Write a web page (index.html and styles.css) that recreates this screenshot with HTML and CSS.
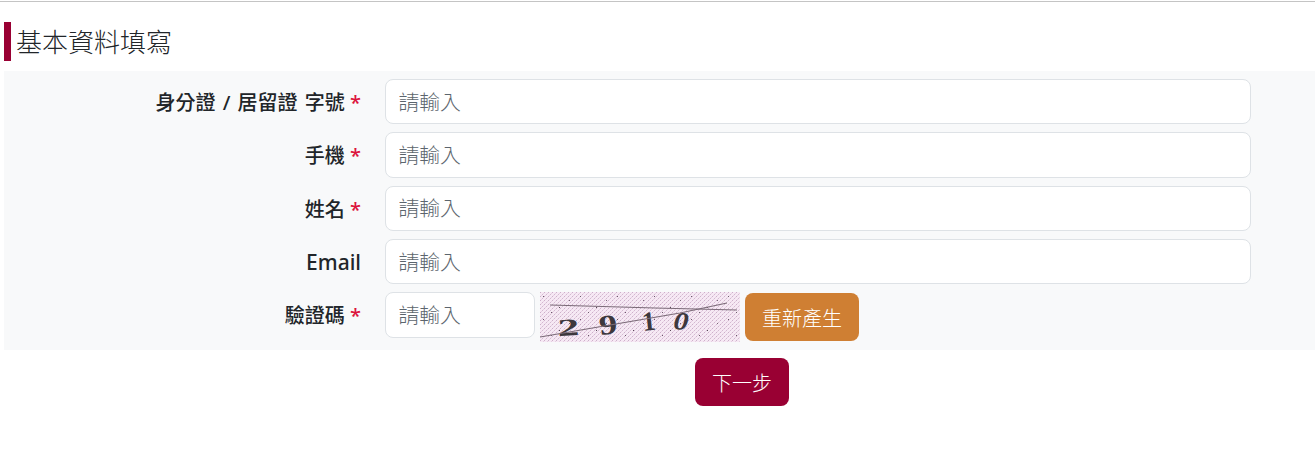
FILE: index.html
```html
<!DOCTYPE html>
<html lang="zh-Hant">
<head>
    <title>基本資料填寫</title>
    <meta charset="UTF-8">
    <link rel="stylesheet" href="styles.css">
</head>
<body>
    <div class="top-line"></div>
    <div class="content">
        <h2 class="section-title">基本資料填寫</h2>
        <div class="form-box">
            <div class="form-row">
                <label class="form-label"><span class="label-text">身分證 / 居留證 字號</span> <span class="req">*</span></label>
                <input class="form-input" type="text" placeholder="請輸入">
            </div>
            <div class="form-row">
                <label class="form-label"><span class="label-text">手機</span> <span class="req">*</span></label>
                <input class="form-input" type="text" placeholder="請輸入">
            </div>
            <div class="form-row">
                <label class="form-label"><span class="label-text">姓名</span> <span class="req">*</span></label>
                <input class="form-input" type="text" placeholder="請輸入">
            </div>
            <div class="form-row">
                <label class="form-label form-label-latin">Email</label>
                <input class="form-input" type="text" placeholder="請輸入">
            </div>
            <div class="form-row">
                <label class="form-label"><span class="label-text">驗證碼</span> <span class="req">*</span></label>
                <div class="captcha-group">
                    <input class="form-input captcha-input" type="text" placeholder="請輸入">
                    <svg class="captcha" width="200" height="50" viewBox="0 0 200 50">
                        <defs>
                            <pattern id="dither" width="4" height="4" patternUnits="userSpaceOnUse">
                                <rect width="4" height="4" fill="#f6e9f4"/>
                                <rect x="0" y="0" width="1" height="1" fill="#cdb0ca"/>
                                <rect x="2" y="2" width="1" height="1" fill="#d4b9d1"/>
                                <rect x="1" y="3" width="1" height="1" fill="#e6d0e3"/>
                                <rect x="3" y="1" width="1" height="1" fill="#e6d0e3"/>
                            </pattern>
                            <pattern id="specks" width="37" height="23" patternUnits="userSpaceOnUse">
                                <rect x="3" y="4" width="1" height="1" fill="#6b5a6a"/>
                                <rect x="19" y="15" width="1" height="1" fill="#574a56"/>
                                <rect x="29" y="8" width="1" height="1" fill="#7a6878"/>
                                <rect x="11" y="20" width="1" height="1" fill="#6b5a6a"/>
                            </pattern>
                        </defs>
                        <rect width="200" height="50" fill="url(#dither)"/>
                        <rect width="200" height="50" fill="url(#specks)"/>
                        <g class="captcha-digits">
                            <text transform="translate(18 44) rotate(-3) scale(1.8 1)">2</text>
                            <text transform="translate(60 43) rotate(-6) scale(1.3 1)" font-size="28">9</text>
                            <text transform="translate(103 39) rotate(-6)" font-size="27">1</text>
                            <text class="captcha-tilted" transform="translate(133 37) rotate(4) scale(1.2 1)" font-size="25">0</text>
                        </g>
                        <path class="captcha-line" d="M10 13 L115 16 L197 18"/>
                        <path class="captcha-line" d="M0 45 L70 33 L140 21 L187 11"/>
                    </svg>
                    <button class="btn btn-orange" type="button">重新產生</button>
                </div>
            </div>
        </div>
        <div class="form-actions">
            <button class="btn btn-primary" type="button">下一步</button>
        </div>
    </div>
</body>
</html>
```

FILE: styles.css
```css
body {
    margin: 0;
    background: #fff;
    font-family: "Noto Sans", "Noto Sans CJK TC", sans-serif;
    color: #212529;
}
.top-line {
    height: 1px;
    margin-top: 1px;
    background: #c4c4c4;
}
.content {
    padding-left: 4px;
}
.section-title {
    margin: 20px 0 10px;
    height: 39px;
    padding-left: 5px;
    border-left: 7px solid #990033;
    font-size: 26px;
    font-weight: 300;
    line-height: 41px;
    color: #212529;
}
.form-box {
    display: flex;
    flex-direction: column;
    gap: 8px;
    padding: 8px 0 13px;
    background: #f8f9fa;
}
.form-row {
    display: flex;
    align-items: center;
    min-height: 45.3px;
}
.form-label {
    flex: none;
    width: 357px;
    text-align: right;
    font-size: 20px;
    font-weight: 500;
}
.label-text {
    word-spacing: 2px;
}
.form-label-latin {
    font-size: 21px;
}
.req {
    color: #dc143c;
}
.form-input {
    box-sizing: border-box;
    width: 866px;
    height: 45.3px;
    margin-left: 24px;
    padding: 6px 12.5px;
    border: 1px solid #dee2e6;
    border-radius: 8px;
    background: #fff;
    font-family: inherit;
    font-size: 20.8px;
    font-weight: 300;
    color: #212529;
}
.form-input::placeholder {
    color: #5c656d;
    opacity: 1;
}
.captcha-group {
    display: flex;
    align-items: center;
    margin-left: 24px;
    gap: 5px;
    height: 50px;
    margin-bottom: -5px;
}
.captcha-input {
    width: 150px;
    margin-left: 0;
    align-self: flex-start;
}
.captcha {
    display: block;
    flex: none;
}
.captcha-digits {
    font-family: "Liberation Serif", serif;
    font-size: 24px;
    font-weight: bold;
    fill: #3d383d;
}
.captcha-tilted {
    font-style: italic;
}
.captcha-line {
    fill: none;
    stroke: #7b6b78;
    stroke-width: 1.2;
}
.btn {
    box-sizing: border-box;
    height: 48px;
    padding: 0 17px;
    border: none;
    border-radius: 8px;
    color: #fff;
    font-family: inherit;
    font-size: 20px;
    font-weight: 300;
    cursor: pointer;
}
.btn-orange {
    background: #cf7f33;
}
.btn-primary {
    background: #990033;
}
.form-actions {
    display: flex;
    justify-content: center;
    padding: 8px 0 0 165px;
}
```
